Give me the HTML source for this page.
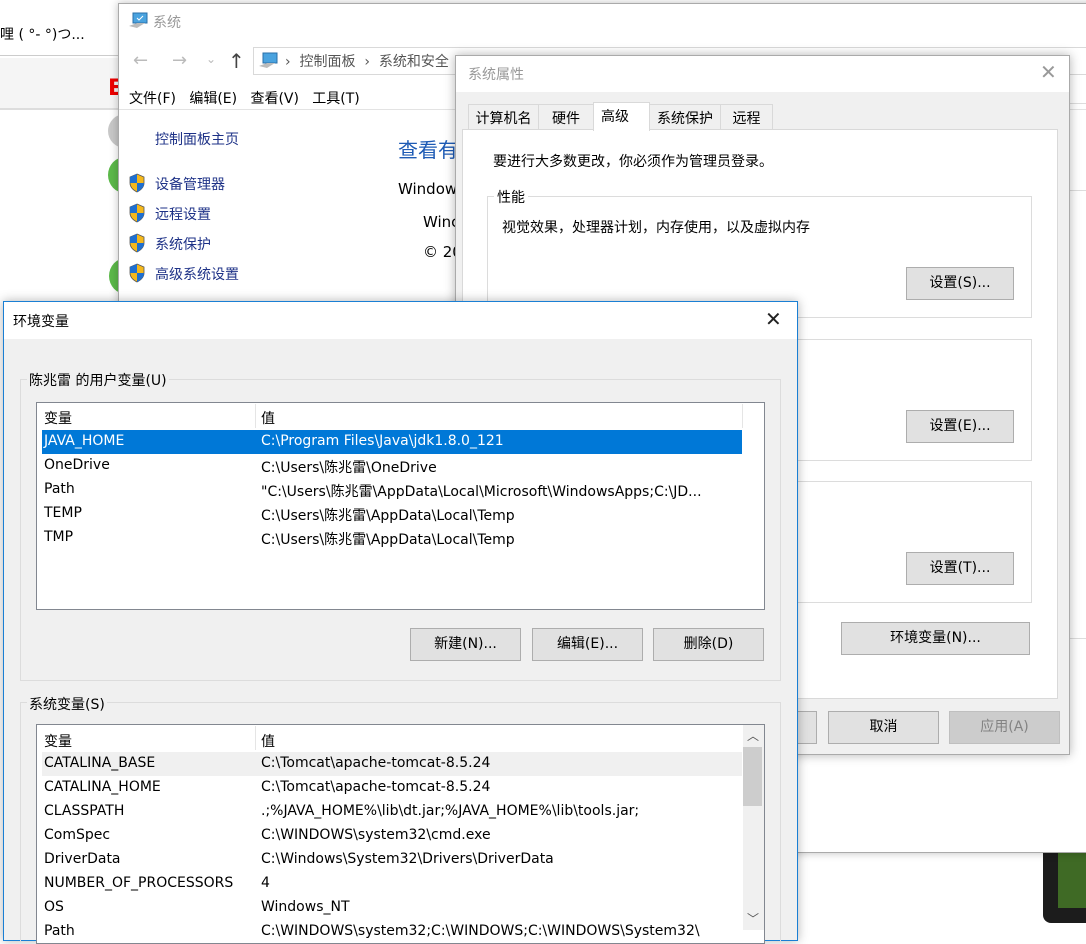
<!DOCTYPE html>
<html><head><meta charset="utf-8"><style>
*{margin:0;padding:0;box-sizing:border-box}
body{width:1086px;height:929px;overflow:hidden;background:#fff;position:relative;font-family:"DejaVu Sans","Noto Sans CJK SC",sans-serif;font-size:14px;color:#000}
.a{position:absolute;white-space:nowrap}
.btn{position:absolute;background:#e1e1e1;border:1px solid #adadad;text-align:center;font-size:14px}
.grp{position:absolute;border:1px solid #dcdcdc}
.shield{position:absolute;width:18px;height:20px}
.tab{position:absolute;top:104px;height:26px;border:1px solid #d9d9d9;background:#f0f0f0;padding-top:3px;text-align:center}
</style></head><body>
<!-- browser background -->
<div class="a" style="left:0;top:24px;font-size:14px">哩 ( °- °)つ...</div>
<div class="a" style="left:0;top:55px;width:120px;height:1px;background:#ccc"></div>
<div class="a" style="left:0;top:58px;width:120px;height:50px;background:#f5f5f5"></div>
<div class="a" style="left:0;top:108px;width:120px;height:2px;background:#ddd"></div>
<div class="a" style="left:108px;top:76px;color:#e00;font-weight:bold;font-size:22px">E</div>
<div class="a" style="left:108px;top:114px;width:34px;height:34px;border-radius:50%;background:#c8c8c8"></div>
<div class="a" style="left:108px;top:157px;width:34px;height:36px;border-radius:50%;background:#5cb94a"></div>
<div class="a" style="left:109px;top:258px;width:34px;height:36px;border-radius:50%;background:#5cb94a"></div>
<div class="a" style="left:1043px;top:840px;width:60px;height:83px;border-radius:8px;background:#1c1c1c"></div>
<div class="a" style="left:1058px;top:852px;width:30px;height:56px;background:#3f6a25"></div>

<!-- explorer window -->
<div class="a" style="left:118px;top:3px;width:980px;height:850px;background:#fff;border:1px solid #aaa;box-shadow:0 0 8px rgba(0,0,0,.25)"></div>
<svg class="a" style="left:128px;top:12px" width="22" height="18"><rect x="5" y="1" width="14" height="10" fill="#4aa3df" stroke="#2a6fa8"/><path d="M9 6l2 2 4-4" stroke="#fff" fill="none"/><path d="M1 14l8-3h8l-8 5z" fill="#bbb"/></svg>
<div class="a" style="left:153px;top:12px;color:#999">系统</div>
<div class="a" style="left:133px;top:50px;color:#bbb;font-size:18px">←</div>
<div class="a" style="left:172px;top:50px;color:#bbb;font-size:18px">→</div>
<div class="a" style="left:206px;top:52px;color:#bbb;font-size:12px">⌄</div>
<div class="a" style="left:228px;top:49px;color:#444;font-size:20px">↑</div>
<div class="a" style="left:253px;top:47px;width:850px;height:28px;border:1px solid #d9d9d9"></div>
<svg class="a" style="left:258px;top:52px" width="22" height="18"><rect x="5" y="1" width="14" height="10" fill="#4aa3df" stroke="#2a6fa8"/><path d="M1 14l8-3h8l-8 5z" fill="#bbb"/></svg>
<div class="a" style="left:285px;top:51px;color:#555">›&nbsp;&nbsp;控制面板&nbsp;&nbsp;›&nbsp;&nbsp;系统和安全</div>
<div class="a" style="left:129px;top:88px">文件(F)&nbsp;&nbsp;&nbsp;编辑(E)&nbsp;&nbsp;&nbsp;查看(V)&nbsp;&nbsp;&nbsp;工具(T)</div>
<div class="a" style="left:119px;top:109px;width:970px;height:1px;background:#e3e3e3"></div>
<div class="a" style="left:155px;top:129px;color:#1e3287">控制面板主页</div>
<div class="a" style="left:155px;top:174px;color:#1e3287">设备管理器</div>
<div class="a" style="left:155px;top:204px;color:#1e3287">远程设置</div>
<div class="a" style="left:155px;top:234px;color:#1e3287">系统保护</div>
<div class="a" style="left:155px;top:264px;color:#1e3287">高级系统设置</div>
<svg class="shield" style="left:128px;top:173px" viewBox="0 0 18 20"><path d="M9 1l7 3v6c0 4-3 7-7 9-4-2-7-5-7-9V4z" fill="#f5b81c" stroke="#555" stroke-width=".8"/><path d="M9 1v9H2V4zM9 10h7c0 4-3 7-7 9z" fill="#1f6fd0"/></svg>
<svg class="shield" style="left:128px;top:203px" viewBox="0 0 18 20"><path d="M9 1l7 3v6c0 4-3 7-7 9-4-2-7-5-7-9V4z" fill="#f5b81c" stroke="#555" stroke-width=".8"/><path d="M9 1v9H2V4zM9 10h7c0 4-3 7-7 9z" fill="#1f6fd0"/></svg>
<svg class="shield" style="left:128px;top:233px" viewBox="0 0 18 20"><path d="M9 1l7 3v6c0 4-3 7-7 9-4-2-7-5-7-9V4z" fill="#f5b81c" stroke="#555" stroke-width=".8"/><path d="M9 1v9H2V4zM9 10h7c0 4-3 7-7 9z" fill="#1f6fd0"/></svg>
<svg class="shield" style="left:128px;top:263px" viewBox="0 0 18 20"><path d="M9 1l7 3v6c0 4-3 7-7 9-4-2-7-5-7-9V4z" fill="#f5b81c" stroke="#555" stroke-width=".8"/><path d="M9 1v9H2V4zM9 10h7c0 4-3 7-7 9z" fill="#1f6fd0"/></svg>
<div class="a" style="left:398px;top:134px;color:#1e5bb5;font-size:20px">查看有</div>
<div class="a" style="left:398px;top:180px;font-size:15px">Window</div>
<div class="a" style="left:423px;top:213px;font-size:15px">Winc</div>
<div class="a" style="left:423px;top:243px;font-size:15px">© 20</div>
<div class="a" style="left:1069px;top:103px;width:20px;height:1px;background:#ddd"></div>
<div class="a" style="left:1069px;top:190px;width:20px;height:1px;background:#ddd"></div>
<div class="a" style="left:1069px;top:638px;width:20px;height:1px;background:#ddd"></div>

<!-- system properties -->
<div class="a" style="left:455px;top:55px;width:615px;height:700px;background:#f0f0f0;border:1px solid #aaa;box-shadow:0 0 10px rgba(0,0,0,.3)"></div>
<div class="a" style="left:456px;top:56px;width:613px;height:36px;background:#fff"></div>
<div class="a" style="left:468px;top:64px;color:#999">系统属性</div>
<div class="a" style="left:1040px;top:60px;color:#999;font-size:20px">✕</div>
<div class="a" style="left:462px;top:129px;width:596px;height:570px;background:#fff;border:1px solid #d9d9d9"></div>
<div class="tab" style="left:468px;width:71px">计算机名</div>
<div class="tab" style="left:538px;width:56px">硬件</div>
<div class="tab" style="left:649px;width:72px">系统保护</div>
<div class="tab" style="left:720px;width:53px">远程</div>
<div class="a" style="left:593px;top:102px;width:57px;height:29px;border:1px solid #d9d9d9;border-bottom:none;background:#fff;padding:3px 0 0 7px">高级</div>
<div class="a" style="left:493px;top:151px">要进行大多数更改，你必须作为管理员登录。</div>
<div class="grp" style="left:487px;top:196px;width:545px;height:122px"></div>
<div class="a" style="left:494px;top:187px;background:#fff;padding:0 3px">性能</div>
<div class="a" style="left:502px;top:217px">视觉效果，处理器计划，内存使用，以及虚拟内存</div>
<div class="btn" style="left:906px;top:267px;width:108px;height:33px;line-height:31px">设置(S)...</div>
<div class="grp" style="left:487px;top:339px;width:545px;height:122px"></div>
<div class="btn" style="left:906px;top:410px;width:108px;height:33px;line-height:31px">设置(E)...</div>
<div class="grp" style="left:487px;top:481px;width:545px;height:122px"></div>
<div class="btn" style="left:906px;top:552px;width:108px;height:33px;line-height:31px">设置(T)...</div>
<div class="btn" style="left:841px;top:622px;width:189px;height:33px;line-height:31px">环境变量(N)...</div>
<div class="btn" style="left:760px;top:711px;width:57px;height:33px"></div>
<div class="btn" style="left:828px;top:711px;width:111px;height:33px;line-height:31px">取消</div>
<div class="btn" style="left:949px;top:711px;width:111px;height:33px;line-height:31px;background:#cccccc;border-color:#bfbfbf;color:#838383">应用(A)</div>

<!-- env variables dialog -->
<div class="a" style="left:3px;top:301px;width:795px;height:640px;background:#f0f0f0;border:1px solid #1a7fd4;box-shadow:0 0 10px rgba(0,0,0,.3)"></div>
<div class="a" style="left:4px;top:302px;width:793px;height:37px;background:#fff"></div>
<div class="a" style="left:13px;top:311px">环境变量</div>
<div class="a" style="left:765px;top:307px;color:#222;font-size:20px">✕</div>
<div class="grp" style="left:20px;top:379px;width:761px;height:302px"></div>
<div class="a" style="left:27px;top:370px;background:#f0f0f0;padding:0 2px">陈兆雷 的用户变量(U)</div>
<div class="a" style="left:36px;top:402px;width:729px;height:208px;background:#fff;border:1px solid #828790"></div>
<div class="a" style="left:255px;top:404px;width:1px;height:24px;background:#e5e5e5"></div>
<div class="a" style="left:742px;top:404px;width:1px;height:24px;background:#e5e5e5"></div>
<div class="a" style="left:44px;top:408px">变量</div>
<div class="a" style="left:261px;top:408px">值</div>
<div class="a" style="left:42px;top:430px;width:700px;height:24px;background:#0078d7"></div>
<div class="a" style="left:44px;top:433px;color:#fff">JAVA_HOME</div>
<div class="a" style="left:261px;top:433px;color:#fff">C:\Program Files\Java\jdk1.8.0_121</div>
<div class="a" style="left:44px;top:457px">OneDrive</div><div class="a" style="left:261px;top:457px">C:\Users\陈兆雷\OneDrive</div>
<div class="a" style="left:44px;top:481px">Path</div><div class="a" style="left:261px;top:481px">"C:\Users\陈兆雷\AppData\Local\Microsoft\WindowsApps;C:\JD...</div>
<div class="a" style="left:44px;top:505px">TEMP</div><div class="a" style="left:261px;top:505px">C:\Users\陈兆雷\AppData\Local\Temp</div>
<div class="a" style="left:44px;top:529px">TMP</div><div class="a" style="left:261px;top:529px">C:\Users\陈兆雷\AppData\Local\Temp</div>
<div class="btn" style="left:410px;top:628px;width:111px;height:33px;line-height:31px">新建(N)...</div>
<div class="btn" style="left:532px;top:628px;width:111px;height:33px;line-height:31px">编辑(E)...</div>
<div class="btn" style="left:653px;top:628px;width:111px;height:33px;line-height:31px">删除(D)</div>

<div class="grp" style="left:20px;top:702px;width:761px;height:240px"></div>
<div class="a" style="left:27px;top:694px;background:#f0f0f0;padding:0 2px">系统变量(S)</div>
<div class="a" style="left:36px;top:724px;width:729px;height:220px;background:#fff;border:1px solid #828790"></div>
<div class="a" style="left:255px;top:726px;width:1px;height:24px;background:#e5e5e5"></div>
<div class="a" style="left:44px;top:731px">变量</div>
<div class="a" style="left:261px;top:731px">值</div>
<div class="a" style="left:42px;top:752px;width:700px;height:24px;background:#f0f0f0"></div>
<div class="a" style="left:743px;top:725px;width:21px;height:205px;background:#f0f0f0"></div>
<div class="a" style="left:743px;top:747px;width:19px;height:59px;background:#cdcdcd"></div>
<div class="a" style="left:747px;top:727px;color:#555;font-size:12px">︿</div>
<div class="a" style="left:747px;top:910px;color:#555;font-size:12px">﹀</div>
<div class="a" style="left:44px;top:755px">CATALINA_BASE</div><div class="a" style="left:261px;top:755px">C:\Tomcat\apache-tomcat-8.5.24</div>
<div class="a" style="left:44px;top:779px">CATALINA_HOME</div><div class="a" style="left:261px;top:779px">C:\Tomcat\apache-tomcat-8.5.24</div>
<div class="a" style="left:44px;top:803px">CLASSPATH</div><div class="a" style="left:261px;top:803px">.;%JAVA_HOME%\lib\dt.jar;%JAVA_HOME%\lib\tools.jar;</div>
<div class="a" style="left:44px;top:827px">ComSpec</div><div class="a" style="left:261px;top:827px">C:\WINDOWS\system32\cmd.exe</div>
<div class="a" style="left:44px;top:851px">DriverData</div><div class="a" style="left:261px;top:851px">C:\Windows\System32\Drivers\DriverData</div>
<div class="a" style="left:44px;top:875px">NUMBER_OF_PROCESSORS</div><div class="a" style="left:261px;top:875px">4</div>
<div class="a" style="left:44px;top:899px">OS</div><div class="a" style="left:261px;top:899px">Windows_NT</div>
<div class="a" style="left:44px;top:923px">Path</div><div class="a" style="left:261px;top:923px">C:\WINDOWS\system32;C:\WINDOWS;C:\WINDOWS\System32\</div>
</body></html>
